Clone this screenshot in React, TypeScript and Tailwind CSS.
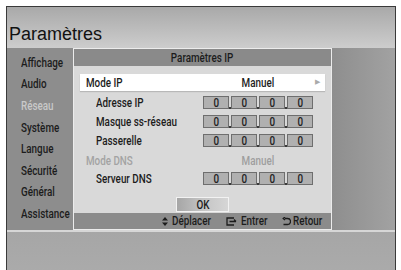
import React from "react";

const F = "font-['Roboto','Liberation_Sans',sans-serif] font-medium text-[12px] leading-none";

function T({ children, left = false, c = "" }: { children: React.ReactNode; left?: boolean; c?: string }) {
  return (
    <span className={`inline-block whitespace-nowrap scale-x-[0.82] ${left ? "origin-left" : "origin-center"} ${c}`}>
      {children}
    </span>
  );
}

function Box() {
  return (
    <div className={`w-[26px] h-[13px] border border-[#6e6e6e] bg-[#b0b0b0] flex items-center justify-center text-[#222] ${F}`}>
      <T>0</T>
    </div>
  );
}

function Boxes() {
  return (
    <div className="flex items-end">
      {[0, 1, 2, 3].map((i) => (
        <React.Fragment key={i}>
          {i > 0 && (
            <div className="w-[2px] h-[13px] flex items-end">
              <div className="w-[2px] h-[2px] bg-[#3a3a3a]" />
            </div>
          )}
          <Box />
        </React.Fragment>
      ))}
    </div>
  );
}

export default function App() {
  const menu = ["Affichage", "Audio", "Réseau", "Système", "Langue", "Sécurité", "Général", "Assistance"];
  return (
    <div className="w-[401px] h-[270px] bg-white pl-[6px] pt-[6px] overflow-hidden">
      <div className="w-[390px] h-[270px] border-l border-t border-r border-[#3a3a3a] flex flex-col">
        {/* header */}
        <div className="h-[41px] bg-linear-to-b from-[#a9a9a9] to-[#cdcdcd] flex items-end pl-[2px] pb-[5px]">
          <span className="text-[18px] leading-none text-[#111] font-['Liberation_Sans',sans-serif]">Paramètres</span>
        </div>
        {/* body */}
        <div className="flex h-[182px]">
          <div className={`w-[66px] bg-[#8d8d8d] flex flex-col pl-[14px] pt-[4px] ${F}`}>
            {menu.map((m) => (
              <div
                key={m}
                className={`h-[21.6px] flex items-center ${m === "Réseau" ? "text-[#c9c9c9]" : "text-[#1c1c1c]"}`}
              >
                <T left>{m}</T>
              </div>
            ))}
          </div>
          <div className={`w-[259px] border border-[#ececec] bg-[#d9d9d9] flex flex-col text-[#1c1c1c] ${F}`}>
            <div className="h-[17px] bg-[#8a8a8a] flex items-center justify-center">
              <T>Paramètres IP</T>
            </div>
            <div className="flex flex-col px-[6px] pt-[8px]">
              <div className="h-[17px] bg-white flex items-center pl-[6px] pr-[5px] shadow-[0_1px_1px_rgba(0,0,0,0.15)]">
                <span className="w-[117px]"><T left>Mode IP</T></span>
                <span className="w-[110px] text-center"><T>Manuel</T></span>
                <span className="flex-1 text-right text-[7px] text-[#aaa]">▶</span>
              </div>
              <div className="flex flex-col pt-[5px] gap-[6px]">
                {["Adresse IP", "Masque ss-réseau", "Passerelle"].map((l) => (
                  <div key={l} className="flex items-center h-[13px]">
                    <span className="w-[123px] pl-[16px]"><T left>{l}</T></span>
                    <Boxes />
                  </div>
                ))}
              </div>
              <div className="flex items-center h-[13px] mt-[7px]">
                <span className="w-[123px] pl-[6px] text-[#a3a3a3]"><T left>Mode DNS</T></span>
                <span className="w-[110px] text-center text-[#9e9e9e]"><T>Manuel</T></span>
              </div>
              <div className="flex items-center h-[13px] mt-[5px]">
                <span className="w-[123px] pl-[16px]"><T left>Serveur DNS</T></span>
                <Boxes />
              </div>
              <div className="flex justify-center mt-[12px] h-[15px]">
                <div className="w-[53px] h-[15px] border border-[#f2f2f2] bg-linear-to-r from-[#a6a6a6] via-[#c4c4c4] to-[#d6d6d6] flex items-center justify-center">
                  <T>OK</T>
                </div>
              </div>
            </div>
            <div className="mt-auto h-[16px] bg-[#8b8b8b] flex items-center justify-end pr-[7px]">
              <svg width="6" height="9" viewBox="0 0 6 9" className="mr-[4px]"><path d="M3 0L6 3.5H0Z M3 9L6 5.5H0Z" fill="#1c1c1c" /></svg>
              <span className="w-[42px]"><T left>Déplacer</T></span>
              <svg width="11" height="9" viewBox="0 0 11 9" fill="none" stroke="#1c1c1c" strokeWidth="1.3" className="ml-[12px] mr-[4px]">
                <path d="M8 1H1V8H8" />
                <path d="M3.5 4.5H10M10 4.5L8 2.5" />
              </svg>
              <span className="w-[28px]"><T left>Entrer</T></span>
              <svg width="9" height="9" viewBox="0 0 9 9" fill="none" stroke="#1c1c1c" strokeWidth="1.3" className="ml-[13px] mr-[2px]">
                <path d="M3 1.5H5.5A3 3 0 0 1 5.5 7.5H1.5" />
                <path d="M3 0L1.2 1.5L3 3" />
              </svg>
              <span className="w-[31px]"><T left>Retour</T></span>
            </div>
          </div>
          <div className="flex-1 bg-linear-to-r from-[#8e8e8e] to-[#a2a2a2]" />
        </div>
        <div className="h-[2px] bg-[#d6d6d6]" />
        <div className="flex-1 bg-linear-to-b from-[#a6a6a6] to-[#ababab]" />
      </div>
    </div>
  );
}
